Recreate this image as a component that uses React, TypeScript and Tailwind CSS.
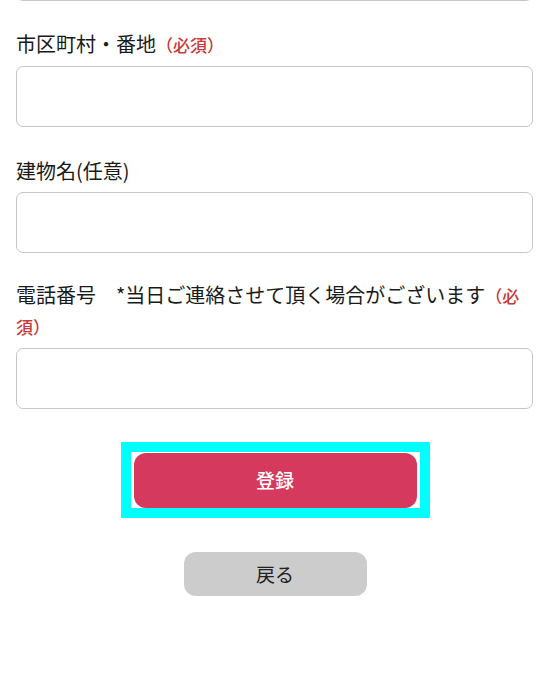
import React from "react";

const font = { fontFamily: '"Noto Sans CJK JP", "Noto Sans", sans-serif' };

function Field({ children, className = "" }: { children: React.ReactNode; className?: string }) {
  return (
    <div className={className}>
      <div className="text-[20px] leading-[30px] text-[#1a1a1a]">{children}</div>
      <div className="mt-[6px] h-[61px] rounded-[7px] border border-[#c6c6c6] bg-white" />
    </div>
  );
}

export default function App() {
  return (
    <div className="min-h-[676px] w-[550px] overflow-hidden bg-white" style={font}>
      <div className="px-[16px] pr-[17px]">
        <div className="-mt-[60px] h-[61px] rounded-[7px] border border-[#c6c6c6] bg-white" />
        <Field className="mt-[28px]">
          市区町村・番地
          <span className="text-[17px] font-medium text-[#c93a3a]">（必須）</span>
        </Field>
        <Field className="mt-[29px]">建物名(任意)</Field>
        <Field className="mt-[27px]">
          電話番号　*当日ご連絡させて頂く場合がございます
          <span className="text-[17px] font-medium text-[#c93a3a]">
            （必
            <br />
            須）
          </span>
        </Field>
      </div>
      <div className="mt-[33px] flex justify-center">
        <div className="border-[10px] border-[#00ffff] px-[3px] pt-[1px]">
          <button className="flex h-[55px] w-[283px] items-center justify-center rounded-[12px] bg-[#d5395d] text-[19px] font-medium text-white">
            登録
          </button>
        </div>
      </div>
      <div className="mt-[34px] flex justify-center">
        <button className="flex h-[44px] w-[183px] items-center justify-center rounded-[12px] bg-[#cccccc] text-[19px] text-[#222222]">
          戻る
        </button>
      </div>
    </div>
  );
}
